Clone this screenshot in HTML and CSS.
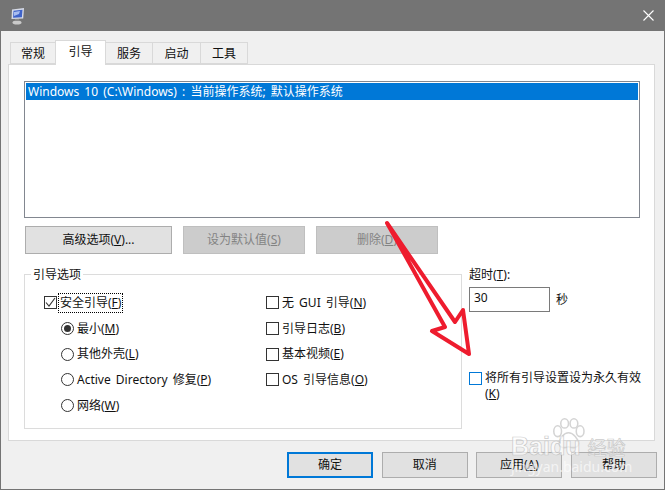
FILE: index.html
```html
<!DOCTYPE html>
<html lang="zh-CN">
<head>
<meta charset="utf-8">
<title>系统配置</title>
<link rel="stylesheet" href="styles.css">
</head>
<body>
<div class="window">
  <header class="titlebar">
    <svg class="app-icon" width="16" height="18" viewBox="0 0 16 18">
      <ellipse cx="7" cy="15.5" rx="4.5" ry="2" fill="#c9c9c9"/>
      <rect x="5" y="11" width="4" height="3" fill="#8a8a8a"/>
      <path d="M2 2.5 14 1l-.8 10.5L1.5 12z" fill="#d7dbe8"/>
      <path d="M3.5 3.8 12.5 2.8l-.6 7.4-8.8.6z" fill="#3f63c9"/>
      <path d="M4 5l6-1-1 3-5 2z" fill="#a9bdf0"/>
    </svg>
    <svg class="close-icon" width="11" height="11" viewBox="0 0 11 11">
      <path d="M.5.5l10 10M10.5.5l-10 10" stroke="#fff" stroke-width="1.1" fill="none"/>
    </svg>
  </header>
  <main class="content">
    <nav class="tabs">
      <div class="tab">常规</div>
      <div class="tab active">引导</div>
      <div class="tab tab-b">服务</div>
      <div class="tab tab-c">启动</div>
      <div class="tab tab-b">工具</div>
    </nav>
    <section class="panel">
      <div class="listbox">
        <div class="list-item">Windows 10 (C:\Windows) : 当前操作系统; 默认操作系统</div>
      </div>
      <div class="list-actions">
        <button class="btn wide">高级选项(<u>V</u>)...</button>
        <button class="btn wide off">设为默认值(<u>S</u>)</button>
        <button class="btn wide off">删除(<u>D</u>)</button>
      </div>
      <div class="lower">
        <fieldset class="group">
          <legend>引导选项</legend>
          <div class="options">
            <div class="col col-left">
              <div class="opt"><span class="check checked"><svg width="11" height="11" viewBox="0 0 11 11"><path d="M1 5.5 4 9l6-8" stroke="#333" stroke-width="1.1" fill="none"/></svg></span><span class="focus">安全引导(<u>F</u>)</span></div>
              <div class="opt sub"><span class="radio on"></span><span>最小(<u>M</u>)</span></div>
              <div class="opt sub"><span class="radio"></span><span>其他外壳(<u>L</u>)</span></div>
              <div class="opt sub"><span class="radio"></span><span>Active Directory 修复(<u>P</u>)</span></div>
              <div class="opt sub"><span class="radio"></span><span>网络(<u>W</u>)</span></div>
            </div>
            <div class="col">
              <div class="opt"><span class="check"></span><span>无 GUI 引导(<u>N</u>)</span></div>
              <div class="opt"><span class="check"></span><span>引导日志(<u>B</u>)</span></div>
              <div class="opt"><span class="check"></span><span>基本视频(<u>E</u>)</span></div>
              <div class="opt"><span class="check"></span><span>OS 引导信息(<u>O</u>)</span></div>
            </div>
          </div>
        </fieldset>
        <div class="side">
          <div class="side-label">超时(<u>T</u>):</div>
          <div class="timeout">
            <div class="input">30</div>
            <span class="unit">秒</span>
          </div>
          <div class="permanent">
            <span class="check hover"></span>
            <span class="permanent-text">将所有引导设置设为永久有效<br>(<u>K</u>)</span>
          </div>
        </div>
      </div>
    </section>
    <footer class="footer">
      <button class="btn dialog default">确定</button>
      <button class="btn dialog">取消</button>
      <button class="btn dialog">应用(<u>A</u>)</button>
      <button class="btn dialog">帮助</button>
    </footer>
  </main>
  <svg class="arrow" width="100" height="145" viewBox="0 0 100 145">
    <path d="M7 8 L75 107 L83 95 L89 139 L52 116 L65 112 Z" fill="none" stroke="#ee1c2e" stroke-width="4" stroke-linejoin="round"/>
  </svg>
  <div class="watermark">
    <svg class="paw" width="35" height="31" viewBox="0 0 44 40">
      <g fill="none" stroke="#d4d4d4" stroke-width="2">
        <ellipse cx="8" cy="17" rx="5" ry="7"/>
        <ellipse cx="17" cy="7" rx="5" ry="6"/>
        <ellipse cx="29" cy="7" rx="5" ry="6"/>
        <ellipse cx="37" cy="17" rx="5" ry="7"/>
        <path d="M22 19c-6 0-12 8-12 14 0 6 7 6 12 4 5 2 13 2 13-4 0-6-7-14-13-14z"/>
      </g>
    </svg>
    <div class="wm-brand"><span class="wm-baidu">Baidu</span><span class="wm-jy">经验</span></div>
    <div class="wm-url">jingyan.baidu.com</div>
  </div>
</div>
</body>
</html>
```
FILE: styles.css
```css
* { box-sizing: border-box; }
html, body { margin: 0; padding: 0; }
body {
  width: 665px;
  height: 490px;
  overflow: hidden;
  font-family: "Noto Sans", "Noto Sans CJK SC", sans-serif;
  font-size: 12px;
  line-height: 16px;
  word-spacing: 2px;
  color: #111;
}
u { text-underline-offset: 1px; }
.window {
  position: relative;
  width: 665px;
  height: 490px;
  border: 1px solid #747474;
  border-top: 0;
  background: #f0f0f0;
  display: flex;
  flex-direction: column;
}
.titlebar {
  height: 31px;
  flex: none;
  background: #747474;
  display: flex;
  align-items: center;
  justify-content: space-between;
  padding: 0 10px 0 9px;
}
.content { flex: 1; padding: 0 7px; display: flex; flex-direction: column; }
.tabs { display: flex; padding: 9px 0 0 2px; height: 34px; position: relative; z-index: 1; }
.tab {
  width: 46px;
  height: 22px;
  margin-top: 2px;
  background: #f0f0f0;
  border: 1px solid #d9d9d9;
  border-left-width: 0;
  text-align: center;
  line-height: 21px;
}
.tab:first-child { border-left-width: 1px; }
.tab-b { width: 47px; }
.tab-c { width: 48px; }
.tab.active {
  width: 51px;
  height: 25px;
  margin-top: 0;
  background: #fff;
  border-bottom: 0;
  border-left-width: 1px;
  margin-left: -1px;
  line-height: 22px;
}
.panel {
  margin-top: -1px;
  width: 647px;
  height: 377px;
  flex: none;
  background: #fff;
  border: 1px solid #d9d9d9;
  padding: 16px 15px 0;
}
.listbox { width: 616px; height: 137px; border: 1px solid #828790; padding: 1px; }
.list-item { background: #0078d7; color: #fff; height: 17px; padding-left: 2px; line-height: 17px; }
.list-actions { display: flex; gap: 11px; margin-top: 8px; padding-left: 1px; }
.btn {
  font: inherit;
  color: inherit;
  background: #e1e1e1;
  border: 1px solid #adadad;
  padding: 0;
}
.btn.wide { width: 122px; height: 28px; }
.btn.wide:first-child { width: 147px; }
.btn.off { background: #ccc; border-color: #bfbfbf; color: #838383; }
.lower { display: flex; margin-top: 11px; }
.group {
  margin: 0;
  width: 438px;
  height: 164px;
  flex: none;
  border: 1px solid #dcdcdc;
  padding: 7px 0 0 0;
}
.group legend { padding: 2px 2px 0; margin-left: 6px; line-height: 16px; }
.options { display: flex; padding-left: 19px; }
.col { display: flex; flex-direction: column; }
.col-left { width: 222px; }
.opt { height: 25.7px; display: flex; align-items: center; }
.sub { padding-left: 17px; }
.check {
  width: 13px;
  height: 13px;
  flex: none;
  border: 1px solid #333;
  background: #fff;
  margin-right: 3px;
  display: flex;
  align-items: center;
  justify-content: center;
}
.check.hover { border-color: #0078d7; margin-top: 2px; }
.radio {
  width: 13px;
  height: 13px;
  flex: none;
  border: 1px solid #333;
  border-radius: 50%;
  background: #fff;
  margin-right: 3px;
  position: relative;
}
.radio.on::after {
  content: "";
  position: absolute;
  left: 2px;
  top: 2px;
  width: 7px;
  height: 7px;
  border-radius: 50%;
  background: #333;
}
.focus { outline: 1px dotted #000; padding: 1px; margin-left: -1px; }
.side { margin-left: 7px; flex: 1; padding-top: 2px; }
.timeout { display: flex; align-items: center; margin-top: 4px; }
.input {
  width: 81px;
  height: 25px;
  border: 1px solid #7a7a7a;
  background: #fff;
  padding-left: 4px;
  line-height: 19px;
}
.unit { margin-left: 6px; }
.permanent { display: flex; align-items: flex-start; margin-top: 58px; }
.permanent-text { white-space: nowrap; }
.footer { display: flex; justify-content: flex-end; gap: 8.67px; margin-top: 11px; width: 649px; }
.btn.dialog { width: 86px; height: 26px; }
.btn.default { border: 2px solid #0078d7; }
.arrow { position: absolute; left: 379px; top: 215px; }
.watermark {
  position: absolute;
  left: 508px;
  top: 416px;
  width: 125px;
  height: 60px;
  color: rgba(255, 255, 255, .65);
  pointer-events: none;
}
.paw { position: absolute; left: 42px; top: 2px; }
.wm-brand {
  position: absolute;
  left: 2px;
  top: 17px;
  display: flex;
  align-items: baseline;
  -webkit-text-stroke: .7px rgba(185, 185, 185, .75);
}
.wm-baidu { font-family: "Liberation Sans", sans-serif; font-weight: 700; font-size: 25px; line-height: 26px; }
.wm-jy { font-size: 19px; margin-left: 7px; line-height: 26px; }
.wm-url { position: absolute; left: 2px; top: 43px; font-size: 14px; white-space: nowrap; }
```
